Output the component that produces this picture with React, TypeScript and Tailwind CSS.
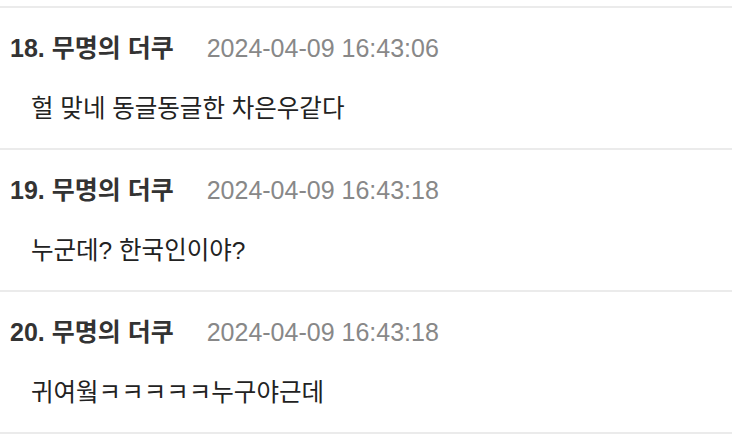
const comments = [
  { no: 18, name: '무명의 더쿠', date: '2024-04-09 16:43:06', text: '헐 맞네 동글동글한 차은우같다' },
  { no: 19, name: '무명의 더쿠', date: '2024-04-09 16:43:18', text: '누군데? 한국인이야?' },
  { no: 20, name: '무명의 더쿠', date: '2024-04-09 16:43:18', text: '귀여웤ㅋㅋㅋㅋㅋ누구야근데' },
];

export default function App() {
  return (
    <div
      className="w-[732px] h-[446px] overflow-hidden bg-white pt-[6px]"
      style={{ fontFamily: '"Liberation Sans", "Noto Sans CJK KR", sans-serif' }}
    >
      <ul>
        {comments.map((c) => (
          <li key={c.no} className="h-[142px] border-t-2 border-[#ebebeb] pl-[10px] pt-[24px]">
            <div className="flex items-baseline gap-[33px] leading-[32px]">
              <span className="text-[25px] font-bold text-[#333]">
                {c.no}. {c.name}
              </span>
              <span className="text-[25px] text-[#888]">{c.date}</span>
            </div>
            <p className="pl-[21px] mt-[29px] text-[24.5px] leading-[32px] text-[#222]">{c.text}</p>
          </li>
        ))}
      </ul>
      <div className="border-t-2 border-[#ebebeb]" />
    </div>
  );
}
